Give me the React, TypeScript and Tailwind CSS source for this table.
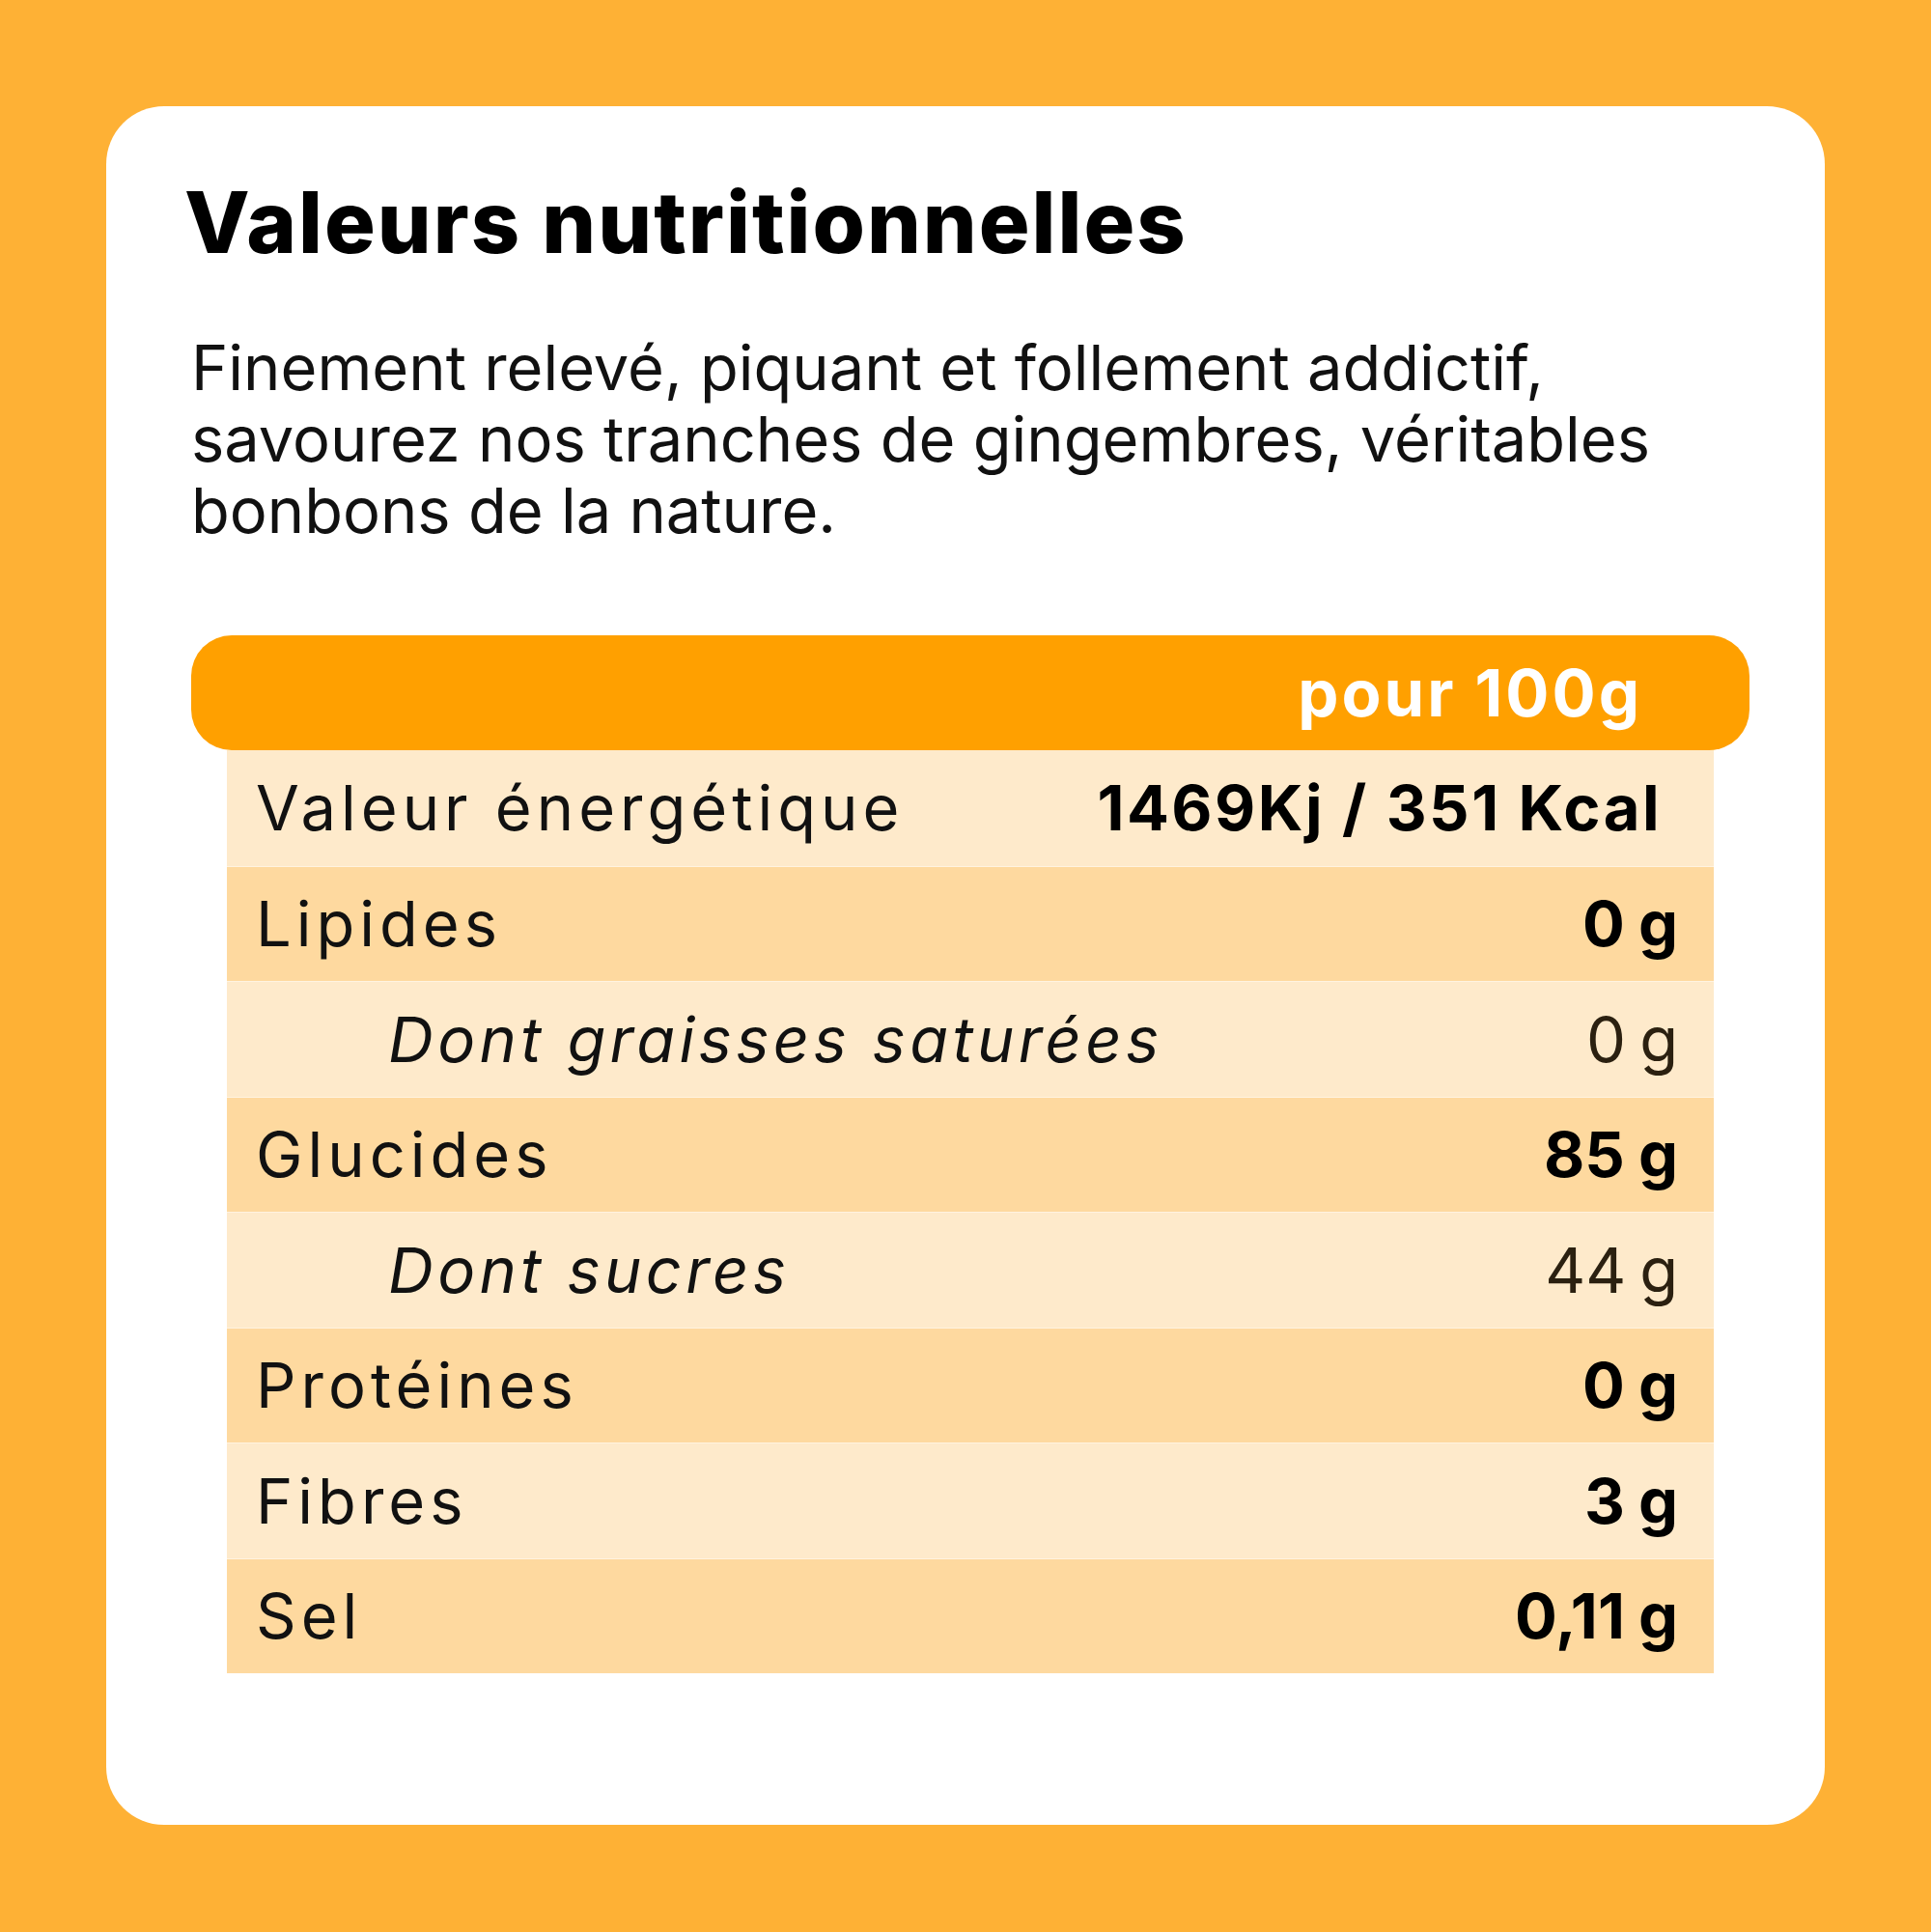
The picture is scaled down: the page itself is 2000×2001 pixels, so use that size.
const rows = [
  { label: 'Valeur énergétique', value: '1469Kj / 351 Kcal', bold: true, sub: false, dark: false, energy: true },
  { label: 'Lipides', value: '0', bold: true, sub: false, dark: true },
  { label: 'Dont graisses saturées', value: '0', bold: false, sub: true, dark: false },
  { label: 'Glucides', value: '85', bold: true, sub: false, dark: true },
  { label: 'Dont sucres', value: '44', bold: false, sub: true, dark: false },
  { label: 'Protéines', value: '0', bold: true, sub: false, dark: true },
  { label: 'Fibres', value: '3', bold: true, sub: false, dark: false },
  { label: 'Sel', value: '0,11', bold: true, sub: false, dark: true },
]

function Row({ label, value, bold, sub, dark, energy, first }: (typeof rows)[number] & { energy?: boolean; first: boolean }) {
  return (
    <div
      className={`flex h-[119.5px] items-center justify-between ${dark ? 'bg-[#FED99F]' : 'bg-[#FEEACB]'} ${
        first ? '' : 'border-t border-[#FFF3E0]'
      } ${sub ? 'pl-[167px]' : 'pl-[30px]'} ${energy ? 'pr-[54px]' : 'pr-[37px]'}`}
    >
      <span className={`text-[65px] leading-none text-[#111] ${sub ? 'italic tracking-[4.3px]' : 'tracking-[5px]'}`}>
        {label}
      </span>
      {energy ? (
        <span className="text-[65px] font-bold leading-none tracking-[2.5px] text-black">{value}</span>
      ) : (
        <span className={`text-[65px] leading-none ${bold ? 'font-bold text-black' : 'font-normal text-[#2b2010]'}`}>
          {value}
          <span className="ml-[14px]">g</span>
        </span>
      )}
    </div>
  )
}

export default function App() {
  return (
    <div className="h-[2001px] w-[2000px] bg-[#FEB135] p-[110px] font-['Inter',sans-serif]">
      <div className="h-[1780px] w-[1780px] rounded-[60px] bg-white pl-[88px] pr-[78px] pt-[76px]">
        <h1 className="-ml-[7px] text-[88px] font-extrabold leading-none tracking-[2px] text-black">
          Valeurs nutritionnelles
        </h1>

        <p className="mt-[70px] whitespace-nowrap text-[65px] leading-[74px] tracking-[0px] text-[#111]">
          Finement relevé, piquant et follement addictif,
          <br />
          savourez nos tranches de gingembres, véritables
          <br />
          bonbons de la nature.
        </p>

        <div className="mt-[92px]">
          <div className="flex h-[119px] items-center justify-end rounded-[42px] bg-[#FFA000] pr-[111px]">
            <span className="text-[67px] font-bold leading-none tracking-[3px] text-white">pour 100g</span>
          </div>
          <div className="mx-[37px]">
            {rows.map((r, i) => (
              <Row key={r.label} {...r} first={i === 0} />
            ))}
          </div>
        </div>
      </div>
    </div>
  )
}
